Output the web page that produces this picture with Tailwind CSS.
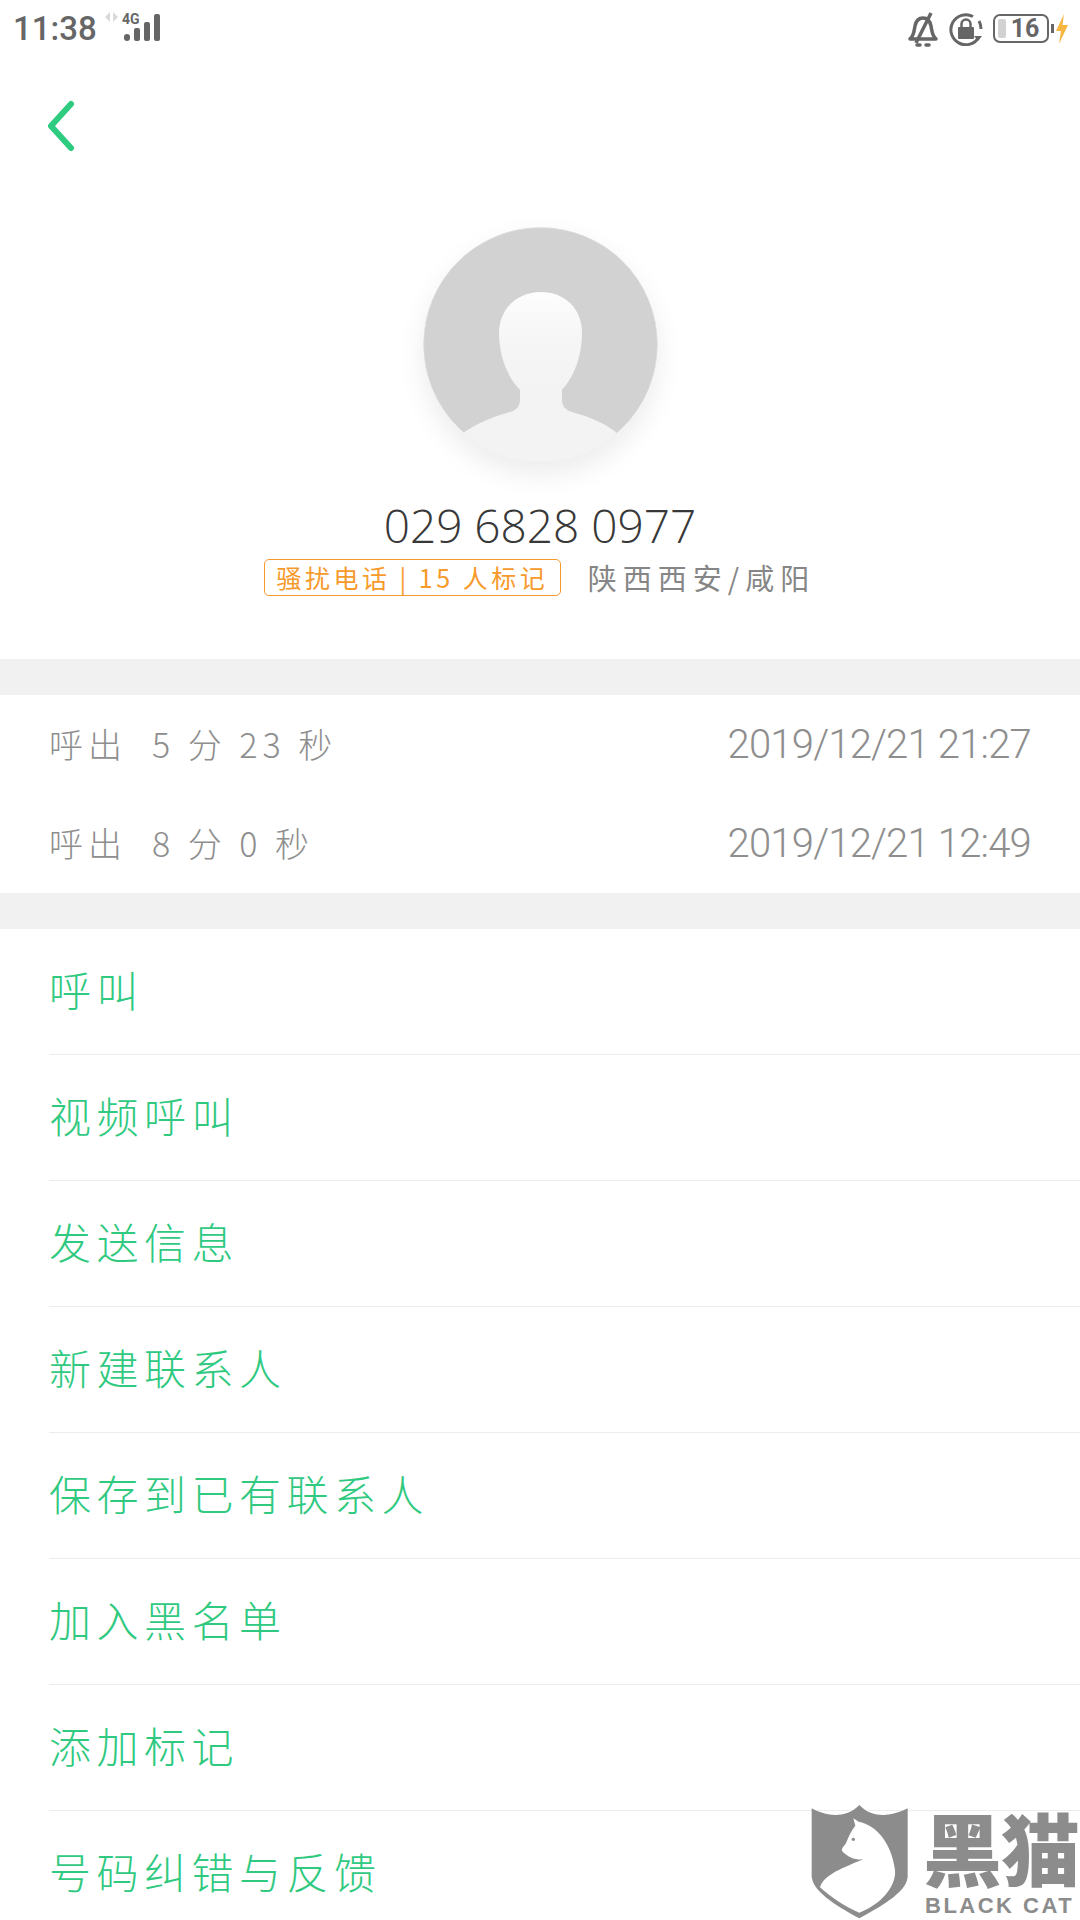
<!DOCTYPE html>
<html lang="zh-CN">
<head>
  <meta charset="UTF-8" />
  <title>通话详情</title>
  <script src="https://cdn.jsdelivr.net/npm/@tailwindcss/browser@4"></script>
</head>
<body class="bg-white">
<div class="relative w-[1080px] h-[1920px] overflow-hidden bg-white font-['Noto_Sans_CJK_SC','Noto_Sans',sans-serif]">

  <!-- status bar -->
  <header class="flex items-center justify-between h-[54px] pl-[13px] pr-[12px]">
    <div class="flex items-center">
      <span class="font-['Roboto',sans-serif] font-medium text-[33px] leading-[54px] pt-[3px] text-[#666666]">11:38</span>
      <svg class="ml-[5px]" width="60" height="54" viewBox="0 0 60 54">
        <path d="M8 12v10l-5-5zM11 12v10l5-5z" fill="#d8d8d8"/>
        <rect x="22" y="34" width="6" height="7" rx="3" fill="#666"/>
        <rect x="32" y="28" width="6" height="13" rx="2" fill="#666"/>
        <rect x="42" y="22" width="6" height="19" rx="2" fill="#666"/>
        <rect x="52" y="14" width="6" height="27" rx="2" fill="#666"/>
        <text x="20" y="24" font-family="Roboto" font-weight="700" font-size="14" fill="#666">4G</text>
      </svg>
    </div>
    <div class="flex items-center pt-[3px]">
      <svg width="32" height="36" viewBox="0 0 32 36" fill="none" stroke="#666" stroke-width="3.500">
        <path d="M3 28c4-3 4-8 5-13 1-5 4-8 8-8s7 3 8 8c1 5 1 10 5 13z" stroke-linejoin="round"/>
        <path d="M10 34h3M19 34h3" stroke-linecap="round"/>
        <path d="M24 2L9 32"/>
      </svg>
      <svg class="ml-[10px]" width="34" height="34" viewBox="0 0 34 34" fill="none">
        <path d="M24 4.500A15 15 0 1 0 30 25" stroke="#666" stroke-width="3"/>
        <path d="M30 9a15 15 0 0 1 2 8" stroke="#666" stroke-width="3"/>
        <path d="M25 24h8l-4 5z" fill="#666"/>
        <rect x="9" y="15" width="16" height="12" rx="1" fill="#666"/>
        <path d="M12.500 15v-3a4.500 4.500 0 0 1 9 0v3" stroke="#666" stroke-width="2.500"/>
      </svg>
      <div class="ml-[10px] relative flex items-center justify-center w-[56px] h-[29px] border-[2.5px] border-[#666666] rounded-[7px] overflow-hidden">
        <span class="absolute left-[3px] top-[3px] bottom-[3px] w-[8px] bg-[#d2d2d2] rounded-[2px]"></span>
        <span class="ml-[8px] font-['Roboto',sans-serif] font-bold text-[25px] leading-none text-[#666666]">16</span>
      </div>
      <span class="ml-[2px] w-[3px] h-[9px] bg-[#666666]"></span>
      <svg class="ml-[2px]" width="12" height="30" viewBox="0 0 12 30"><path d="M8 0L0 17h5L3 30l9-19H6.500z" fill="#f5b642"/></svg>
    </div>
  </header>

  <!-- back -->
  <nav class="h-[173px] pl-[46px] pt-[46px]">
    <svg width="30" height="52" viewBox="0 0 30 52" fill="none"><path d="M25 4L5 26l20 22" stroke="#2ecb80" stroke-width="6" stroke-linecap="round" stroke-linejoin="round"/></svg>
  </nav>

  <!-- contact -->
  <section class="flex flex-col items-center h-[432px]">
    <svg class="rounded-full shadow-[0_12px_28px_rgba(0,0,0,0.08)]" width="235" height="235" viewBox="0 0 235 235">
      <defs>
        <linearGradient id="faceFill" x1="0" y1="0" x2="0" y2="1">
          <stop offset="0" stop-color="#fdfdfd"/>
          <stop offset="0.5" stop-color="#f5f5f5"/>
          <stop offset="1" stop-color="#f3f3f3"/>
        </linearGradient>
      </defs>
      <circle cx="117.500" cy="117.500" r="117" fill="#d2d2d2" stroke="#e2e2e2" stroke-width="1"/>
      <path d="M40 206C54 196 72 189 87 185C94 183 97 179 97 172V150H139V172C139 179 142 183 149 185C164 189 182 196 194 206C174 224 147 235 117.500 235C87 235 60 224 40 206Z" fill="#f3f3f3"/>
      <path d="M118 65C94 65 76 82 76 106C76 142 97 173 118 173C139 173 159 142 159 106C159 82 142 65 118 65Z" fill="url(#faceFill)"/>
    </svg>
    <div class="mt-[38px] font-['Open_Sans',sans-serif] font-light text-[46px] leading-[50px] text-[#383838]">029 6828 0977</div>
    <div class="flex items-center mt-[9px] ml-[-1px]">
      <span class="flex items-center justify-center w-[297px] h-[37px] border border-[#f79a2c] rounded-[5px] text-[25px] leading-none tracking-[3.500px] text-[#f79a2c] whitespace-nowrap">骚扰电话 | 15 人标记</span>
      <span class="ml-[27px] text-[29px] leading-none tracking-[6px] text-[#868686] whitespace-nowrap">陕西西安/咸阳</span>
    </div>
  </section>

  <div class="h-[36px] bg-[#f1f1f1]"></div>

  <!-- call log -->
  <section class="text-[#8e8e8e]">
    <div class="flex items-center justify-between h-[99px] pl-[49px] pr-[49px]">
      <span class="text-[34px] tracking-[5px] font-light whitespace-nowrap pb-[3px]">呼出&nbsp; 5 分 23 秒</span>
      <span class="font-['Roboto',sans-serif] font-light text-[40px] tracking-[-0.8px] whitespace-nowrap">2019/12/21 21:27</span>
    </div>
    <div class="flex items-center justify-between h-[99px] pl-[49px] pr-[49px]">
      <span class="text-[34px] tracking-[5px] font-light whitespace-nowrap pb-[3px]">呼出&nbsp; 8 分 0 秒</span>
      <span class="font-['Roboto',sans-serif] font-light text-[40px] tracking-[-0.8px] whitespace-nowrap">2019/12/21 12:49</span>
    </div>
  </section>

  <div class="h-[36px] bg-[#f1f1f1]"></div>

  <!-- actions -->
  <ul class="pl-[49px] text-[42px] tracking-[5.500px] font-light text-[#2fc97f]">
    <li class="flex items-center h-[126px] pb-[7px] border-b border-[#ececec]">呼叫</li>
    <li class="flex items-center h-[126px] pb-[7px] border-b border-[#ececec]">视频呼叫</li>
    <li class="flex items-center h-[126px] pb-[7px] border-b border-[#ececec]">发送信息</li>
    <li class="flex items-center h-[126px] pb-[7px] border-b border-[#ececec]">新建联系人</li>
    <li class="flex items-center h-[126px] pb-[7px] border-b border-[#ececec]">保存到已有联系人</li>
    <li class="flex items-center h-[126px] pb-[7px] border-b border-[#ececec]">加入黑名单</li>
    <li class="flex items-center h-[126px] pb-[7px] border-b border-[#ececec]">添加标记</li>
    <li class="flex items-center h-[126px] pb-[7px]">号码纠错与反馈</li>
  </ul>

  <!-- watermark -->
  <div class="absolute left-[780px] top-[1780px] w-[300px] h-[140px]">
    <svg class="absolute left-0 top-0" width="300" height="140" viewBox="0 0 900 420">
      <path d="M95 85C120 100 190 125 238 75C285 125 355 100 383 85V290C380 340 290 385 238 415C185 385 100 340 95 290Z" fill="#8c8c8c"/>
      <path d="M220 115L236 125C290 135 335 190 345 270C350 320 300 375 238 398C195 380 150 350 120 322C130 290 170 270 250 238C225 240 205 232 188 215C182 208 190 200 198 190C205 170 215 150 226 137Z" fill="#ffffff"/>
      <circle cx="220" cy="178" r="5" fill="#8c8c8c"/>
    </svg>
    <div class="absolute left-[143px] top-[31px] font-black text-[79px] leading-[72px] tracking-[-1px] text-[#8c8c8c] whitespace-nowrap">黑猫</div>
    <div class="absolute left-[145px] top-[113px] font-['Liberation_Sans',sans-serif] font-bold text-[22px] leading-[26px] tracking-[2.500px] text-[#8c8c8c] whitespace-nowrap">BLACK CAT</div>
  </div>

</div>
</body>
</html>
